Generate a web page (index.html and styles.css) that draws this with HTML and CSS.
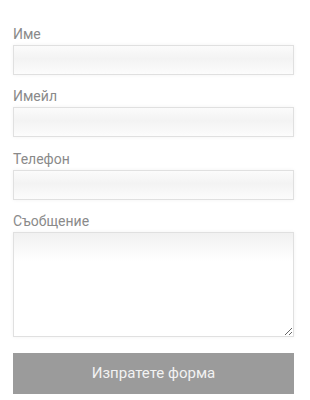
FILE: index.html
```html
<!DOCTYPE html>
<html lang="bg">
<head>
<meta charset="utf-8">
<link rel="stylesheet" href="styles.css">
</head>
<body>
<form class="form">
  <div class="group">
    <label class="label">Име</label>
    <input class="field" type="text">
  </div>
  <div class="group">
    <label class="label">Имейл</label>
    <input class="field" type="text">
  </div>
  <div class="group">
    <label class="label">Телефон</label>
    <input class="field" type="text">
  </div>
  <div class="group">
    <label class="label">Съобщение</label>
    <textarea class="field area"></textarea>
  </div>
  <button class="submit" type="button">Изпратете форма</button>
</form>
</body>
</html>
```

FILE: styles.css
```css
html, body {
  margin: 0;
  padding: 0;
  background: #fff;
}
body {
  font-family: Roboto, "Liberation Sans", sans-serif;
}
.form {
  display: flex;
  flex-direction: column;
  padding: 26px 16px 0 13px;
  width: 281px;
}
.group {
  display: flex;
  flex-direction: column;
  margin-bottom: 13.33px;
}
.label {
  font-size: 14px;
  line-height: 16px;
  font-weight: 400;
  color: #8a8a8a;
  margin-bottom: 3px;
}
.field {
  box-sizing: border-box;
  width: 281px;
  height: 30px;
  margin: 0;
  border: 1px solid #e0e0e0;
  border-radius: 0;
  background: linear-gradient(to bottom, #fbfbfb 0%, #f3f3f3 45%, #fcfcfc 100%);
  box-shadow: 0 0 4px rgba(0, 0, 0, 0.05);
  outline: none;
  font-family: inherit;
}
.area {
  height: 105px;
  resize: vertical;
  background: linear-gradient(to bottom, #f1f1f1 0px, #ffffff 28px, #ffffff 100%);
}
.group:last-of-type {
  margin-bottom: 16px;
}
.submit {
  width: 281px;
  height: 41px;
  border: none;
  border-radius: 0;
  background: #9b9b9b;
  color: #f2f2f2;
  font-family: inherit;
  font-size: 15px;
  padding: 0;
}
```
